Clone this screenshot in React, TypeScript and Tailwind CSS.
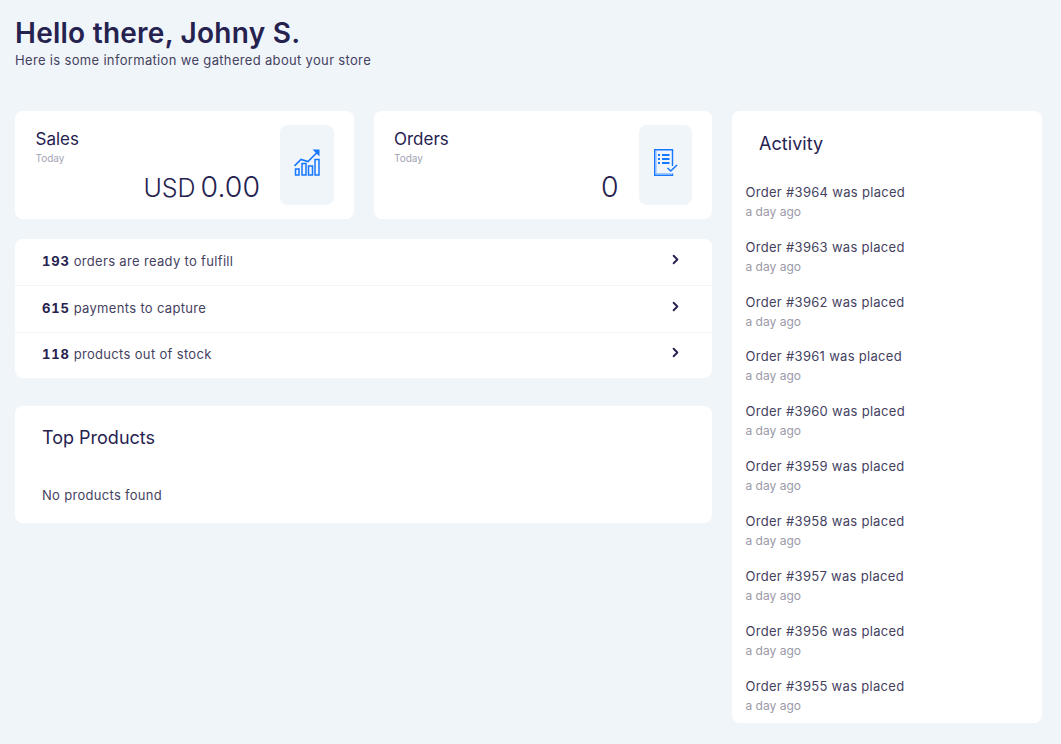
import { ChevronRight } from 'lucide-react'

const orders = [3964, 3963, 3962, 3961, 3960, 3959, 3958, 3957, 3956, 3955]

function SalesIcon() {
    return (
        <svg width="26" height="27" viewBox="0 0 26 27" fill="none" stroke="#1677ff" strokeWidth="1.5">
            <path d="M0.5 17 L7 10.5 L14 12.5 L23 3.5" strokeWidth="1.6" />
            <path d="M18.5 0.5 H25.5 V7.5 Z" fill="#1677ff" stroke="none" />
            <rect x="1.5" y="20" width="3.5" height="6" />
            <rect x="8" y="14.5" width="4" height="11.5" />
            <rect x="14.5" y="17" width="4" height="9" />
            <rect x="21" y="10.5" width="4" height="15.5" />
        </svg>
    )
}

function OrdersIcon() {
    return (
        <svg className="ml-[1px]" width="24" height="28" viewBox="0 0 24 28" fill="none" stroke="#1677ff" strokeWidth="1.4">
            <path d="M18.5 17 V0.7 H0.7 V26.3 H18.5 V24.5" />
            <path d="M2 1.5 V24.8 H17.5" stroke="#7db3ff" strokeWidth="1" />
            <path d="M4 6 H6 M4 10 H6 M4 14 H6" strokeWidth="2" />
            <path d="M8 6 H15.5 M8 10 H15.5 M8 14 H15.5" strokeWidth="2.2" />
            <path d="M13.5 19 L16.8 22 L23 16" strokeWidth="1.6" />
        </svg>
    )
}

function StatCard({ title, value, prefix, icon }: { title: string; value: string; prefix?: string; icon: React.ReactNode }) {
    return (
        <div className="flex-1 h-[108px] bg-white rounded-lg pl-[20.5px] pr-5 pt-[14px] flex justify-between">
            <div className="flex-1 pr-5">
                <div className="text-[17px] leading-[28px] text-[#26224f]">{title}</div>
                <div className="text-[10px] leading-[12px] mt-[-1px] text-[#a3a3b5]">Today</div>
                <div className="text-right text-[#26224f] text-[28.5px] leading-[34px] mt-[6px] font-light">
                    {prefix && <span className="text-[25px] mr-[5px]">{prefix}</span>}
                    {value}
                </div>
            </div>
            <div className="w-[53.5px] h-[80px] bg-[#f0f5fa] rounded-lg flex items-center justify-center pb-[5px]">
                {icon}
            </div>
        </div>
    )
}

function TaskRow({ count, label, className }: { count: number; label: string; className: string }) {
    return (
        <div className={`${className} pl-[27px] pr-[29px] flex items-center justify-between`}>
            <div className="text-[13px] tracking-[0.33px] text-[#45425f]">
                <b className="font-bold tabular-nums tracking-[0.8px] text-[#26224f]">{count}</b> {label}
            </div>
            <ChevronRight size={15} strokeWidth={3} className="text-[#26224f] mt-[-5px]" />
        </div>
    )
}

export default function App() {
    return (
        <div className="min-h-[744px] bg-[#f0f5fa] pl-[15px] pr-[19px] pt-[15px] font-['Inter',sans-serif]">
            <h1 className="text-[28px] leading-[36px] font-semibold tracking-[0.25px] text-[#26224f]">Hello there, Johny S.</h1>
            <p className="text-[13px] leading-[18px] tracking-[0.33px] text-[#45425f]">Here is some information we gathered about your store</p>

            <div className="flex gap-5 mt-[42px]">
                <div className="w-[697px] flex flex-col">
                    <div className="flex gap-5">
                        <StatCard title="Sales" prefix="USD" value="0.00" icon={<SalesIcon />} />
                        <StatCard title="Orders" value="0" icon={<OrdersIcon />} />
                    </div>

                    <div className="bg-white rounded-lg mt-5">
                        <TaskRow className="h-[47px] pb-[1px] border-b border-[#f0f5fa]" count={193} label="orders are ready to fulfill" />
                        <TaskRow className="h-[47px] pb-[1px] border-b border-[#f0f5fa]" count={615} label="payments to capture" />
                        <TaskRow className="h-[45px] pb-[1px]" count={118} label="products out of stock" />
                    </div>

                    <div className="bg-white rounded-lg mt-7 h-[117px] pl-[27px] pt-5">
                        <h2 className="text-[18px] leading-[24px] text-[#26224f]">Top Products</h2>
                        <p className="text-[13px] leading-[18px] tracking-[0.3px] text-[#45425f] mt-[36px]">No products found</p>
                    </div>
                </div>

                <div className="w-[310px] h-[612px] bg-white rounded-lg pl-[13.5px] pr-[14px] pt-[21px]">
                    <h2 className="text-[18px] leading-[24px] tracking-[0.05px] text-[#26224f] pl-[13.5px] mb-[26.8px]">Activity</h2>
                    {orders.map((id) => (
                        <div key={id} className="h-[54.9px]">
                            <div className="text-[13px] leading-[18px] tracking-[0.3px] text-[#45425f]">Order #{id} was placed</div>
                            <div className="text-[12px] leading-[16px] mt-[3px] text-[#9b99a8]">a day ago</div>
                        </div>
                    ))}
                </div>
            </div>
        </div>
    )
}
